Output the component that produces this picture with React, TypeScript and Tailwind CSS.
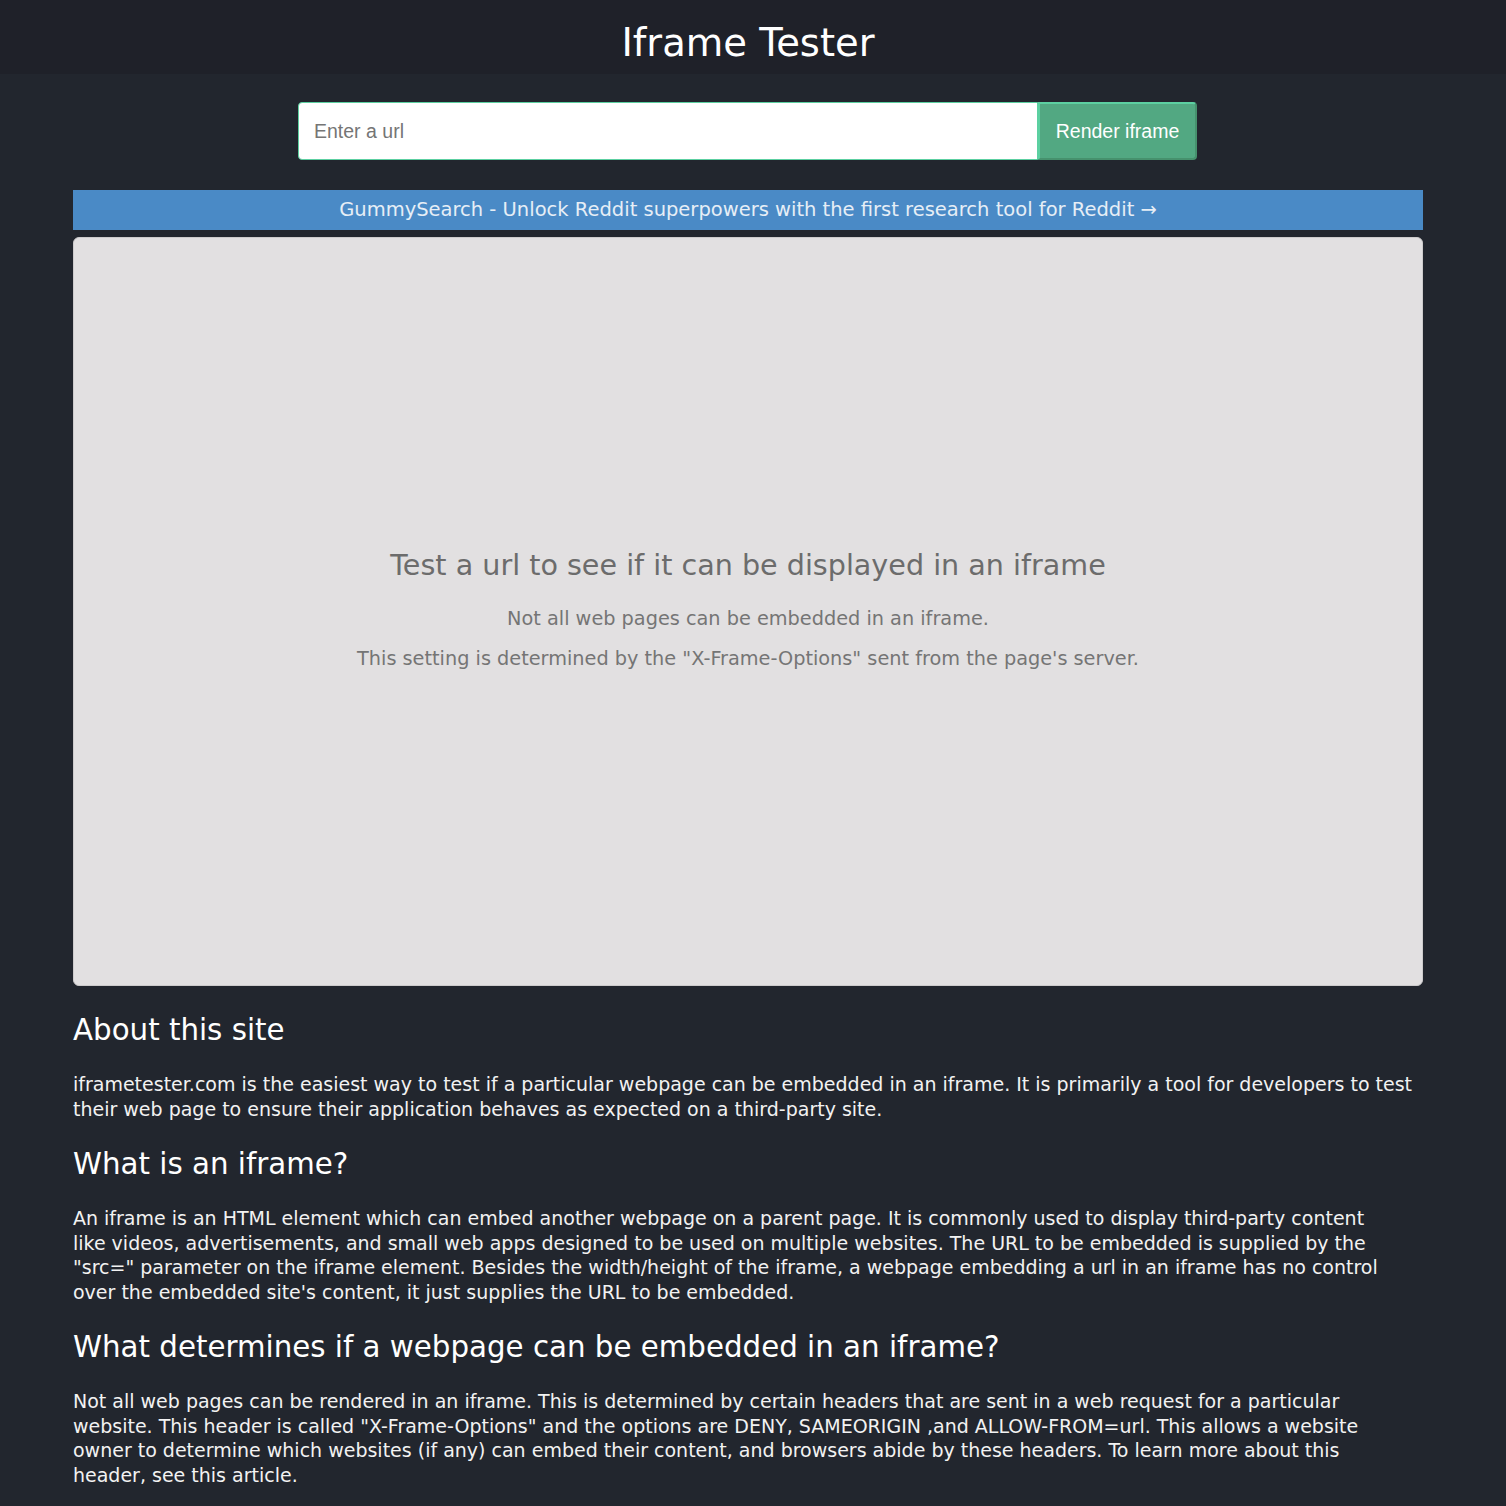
const Heading = ({ children, className = '' }: { children: React.ReactNode; className?: string }) => (
  <h2 className={`text-[29.3px] leading-[36px] text-white ${className}`}>{children}</h2>
);

const Para = ({ children, className = '' }: { children: React.ReactNode; className?: string }) => (
  <p className={`mt-[24px] text-[19px] leading-[24.5px] text-[#f2f2f2] ${className}`}>{children}</p>
);

export default function App() {
  return (
    <div className="min-h-[1506px] bg-[#22262e] font-['DejaVu_Sans',sans-serif] text-white">
      <header className="h-[74px] bg-[#1f2129]">
        <div className="flex h-full w-[1496px] items-center justify-center pt-[12px]">
          <h1 className="text-[38.5px] leading-none font-normal">Iframe Tester</h1>
        </div>
      </header>

      <div className="w-[1496px]">
        <div className="flex justify-center pt-[28px]">
          <div className="ml-[-1px] flex h-[58px] w-[899px] font-['Liberation_Sans',Arial,sans-serif] text-[19.5px]">
            <input
              className="h-full flex-1 rounded-l-[4px] border border-[#5cd0a1] bg-white px-[15px] text-[#333] outline-none placeholder:text-[#757575]"
              placeholder="Enter a url"
            />
            <button className="h-full w-[159px] rounded-r-[4px] border-2 border-t-[#5cd0a1] border-l-[#5cd0a1] border-r-[#46916d] border-b-[#46916d] pt-[2px] bg-[#52a882] text-white">
              Render iframe
            </button>
          </div>
        </div>

        <main className="ml-[73px] w-[1350px] pt-[30px]">
          <a className="flex h-[40px] items-center justify-center bg-[#4a8ac6] text-[19.5px] text-[#e6eef6]">
            GummySearch - Unlock Reddit superpowers with the first research tool for Reddit →
          </a>

          <div className="mt-[7px] flex h-[749px] flex-col items-center justify-center rounded-[6px] border border-[#cdcbcc] bg-[#e2e0e1] pb-[6px]">
            <h2 className="text-[28.6px] leading-[36px] text-[#6c6c6c]">
              Test a url to see if it can be displayed in an iframe
            </h2>
            <p className="mt-[24px] text-[19.3px] leading-[24px] text-[#757575]">
              Not all web pages can be embedded in an iframe.
            </p>
            <p className="mt-[16px] text-[19.3px] leading-[24px] text-[#757575]">
              This setting is determined by the "X-Frame-Options" sent from the page's server.
            </p>
          </div>

          <section className="pt-[26px] pb-[20px]">
            <Heading>About this site</Heading>
            <Para>
              iframetester.com is the easiest way to test if a particular webpage can be embedded in an iframe. It is
              primarily a tool for developers to test
              <br />
              their web page to ensure their application behaves as expected on a third-party site.
            </Para>

            <Heading className="mt-[25px]">What is an iframe?</Heading>
            <Para>
              An iframe is an HTML element which can embed another webpage on a parent page. It is commonly used to
              display third-party content
              <br />
              like videos, advertisements, and small web apps designed to be used on multiple websites. The URL to be
              embedded is supplied by the
              <br />
              "src=" parameter on the iframe element. Besides the width/height of the iframe, a webpage embedding a url in
              an iframe has no control
              <br />
              over the embedded site's content, it just supplies the URL to be embedded.
            </Para>

            <Heading className="mt-[25px]">What determines if a webpage can be embedded in an iframe?</Heading>
            <Para>
              Not all web pages can be rendered in an iframe. This is determined by certain headers that are sent in a
              web request for a particular
              <br />
              website. This header is called "X-Frame-Options" and the options are DENY, SAMEORIGIN ,and ALLOW-FROM=url.
              This allows a website
              <br />
              owner to determine which websites (if any) can embed their content, and browsers abide by these headers. To
              learn more about this
              <br />
              header, see this article.
            </Para>
          </section>
        </main>
      </div>
    </div>
  );
}
